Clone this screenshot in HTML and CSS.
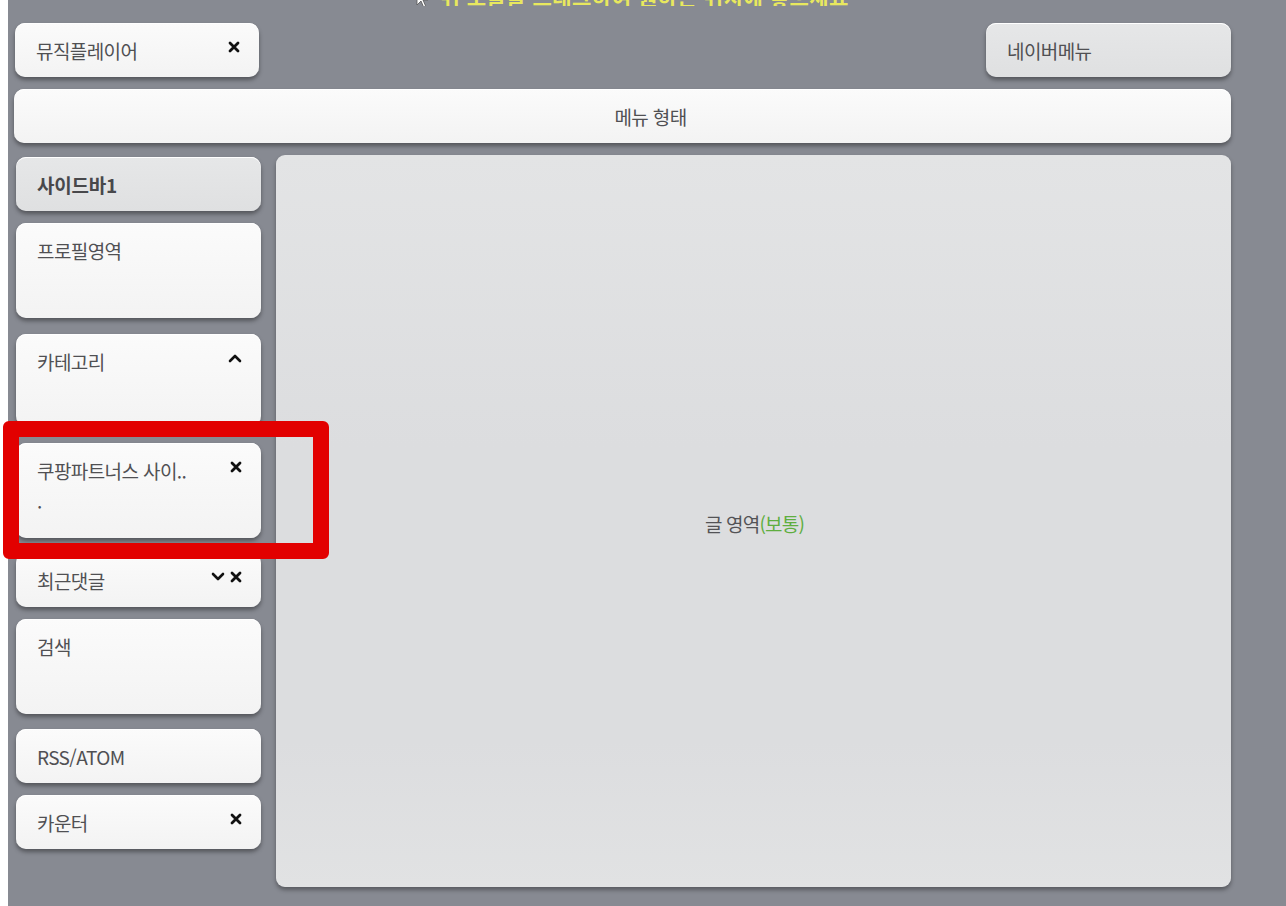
FILE: index.html
```html
<!DOCTYPE html>
<html lang="ko">
<head>
<meta charset="utf-8">
<title>스킨 편집</title>
<link rel="stylesheet" href="styles.css">
</head>
<body>
<div class="stage">
  <div class="hint"><span class="hint-text"><svg class="cursor" width="14" height="20" viewBox="0 0 14 20"><path d="M1 1 L1 16 L5 12 L8 19 L10 18 L7 11 L12 11 Z" fill="#fff" stroke="#555" stroke-width="0.8"/></svg> 위 모듈을 드래그하여 원하는 위치에 놓으세요</span></div>

  <div class="top-row">
    <div class="box box-small music">
      <span class="label">뮤직플레이어</span>
      <span class="icons"><svg class="ico" width="12" height="12" viewBox="0 0 12 12"><path d="M2 2 L10 10 M10 2 L2 10" stroke="#111" stroke-width="2.8" stroke-linecap="round"/></svg></span>
    </div>
    <div class="box box-small box-grey naver">
      <span class="label">네이버메뉴</span>
    </div>
  </div>

  <div class="box box-small menu">
    <span class="label">메뉴 형태</span>
  </div>

  <div class="main-row">
    <div class="sidebar">
      <div class="box box-small box-grey">
        <span class="label bold">사이드바1</span>
      </div>
      <div class="box box-tall gap12">
        <span class="label">프로필영역</span>
      </div>
      <div class="box box-cat gap16">
        <span class="label">카테고리</span>
        <span class="icons"><svg class="ico" width="14" height="12" viewBox="0 0 14 12"><path d="M2 9 L7 4 L12 9" fill="none" stroke="#111" stroke-width="2.6" stroke-linecap="round" stroke-linejoin="round"/></svg></span>
      </div>
      <div class="box box-tall gap17">
        <span class="label">쿠팡파트너스 사이..<br>.</span>
        <span class="icons"><svg class="ico" width="12" height="12" viewBox="0 0 12 12"><path d="M2 2 L10 10 M10 2 L2 10" stroke="#111" stroke-width="2.8" stroke-linecap="round"/></svg></span>
      </div>
      <div class="box box-small gap15">
        <span class="label">최근댓글</span>
        <span class="icons"><svg class="ico" width="14" height="12" viewBox="0 0 14 12"><path d="M2 3 L7 8 L12 3" fill="none" stroke="#111" stroke-width="2.6" stroke-linecap="round" stroke-linejoin="round"/></svg><svg class="ico" width="12" height="12" viewBox="0 0 12 12"><path d="M2 2 L10 10 M10 2 L2 10" stroke="#111" stroke-width="2.8" stroke-linecap="round"/></svg></span>
      </div>
      <div class="box box-tall gap12">
        <span class="label">검색</span>
      </div>
      <div class="box box-small gap15">
        <span class="label">RSS/ATOM</span>
      </div>
      <div class="box box-small gap12">
        <span class="label">카운터</span>
        <span class="icons"><svg class="ico" width="12" height="12" viewBox="0 0 12 12"><path d="M2 2 L10 10 M10 2 L2 10" stroke="#111" stroke-width="2.8" stroke-linecap="round"/></svg></span>
      </div>
    </div>
    <div class="content">
      <span class="content-label">글 영역<span class="green">(보통)</span></span>
    </div>
  </div>
</div>
<div class="highlight"></div>
</body>
</html>
```

FILE: styles.css
```css
html, body {
  margin: 0;
  padding: 0;
  background: #ffffff;
}

body {
  position: relative;
  width: 1286px;
  height: 906px;
  overflow: hidden;
  font-family: "Noto Sans CJK KR", "Noto Sans", sans-serif;
}

.stage {
  margin-left: 8px;
  height: 906px;
  background: #878a92;
  padding: 0 55px 0 6px;
  box-sizing: border-box;
}

.hint {
  height: 6px;
  overflow: hidden;
  text-align: center;
  padding-left: 20px;
}

.hint-text {
  display: inline-block;
  transform: translateY(-17px);
  color: #e8e85e;
  font-weight: 700;
  font-size: 21px;
  line-height: 26px;
  letter-spacing: 0.5px;
}

.cursor {
  vertical-align: -4px;
  margin-right: 4px;
}

.top-row {
  margin-top: 17px;
  display: flex;
  justify-content: space-between;
}

.box {
  display: flex;
  justify-content: space-between;
  align-items: flex-start;
  box-sizing: border-box;
  padding: 13px 19px 0 21px;
  border-radius: 10px;
  background: linear-gradient(#fbfbfb, #f3f3f3);
  box-shadow: 0 3px 4px rgba(0, 0, 0, 0.38), inset 0 1px 0 #ffffff;
  color: #505053;
}

.box-grey {
  background: linear-gradient(#e6e7e8, #dfe0e1);
}

.box-small {
  height: 54px;
}

.box-tall {
  height: 95px;
}

.box-cat {
  height: 92px;
}

.label {
  font-size: 19px;
  line-height: 30px;
  letter-spacing: -0.6px;
}

.label.bold {
  font-weight: 700;
  color: #48484b;
  letter-spacing: -0.2px;
}

.icons {
  display: flex;
  gap: 5px;
  margin-top: 5px;
}

.ico {
  display: block;
}

.music {
  width: 244px;
  margin-left: 1px;
}

.naver {
  width: 245px;
}

.menu {
  margin-top: 12px;
  justify-content: center;
  padding-left: 56px;
  padding-right: 0;
}

.main-row {
  margin-top: 12px;
  display: flex;
  align-items: flex-start;
}

.sidebar {
  width: 245px;
  margin-left: 2px;
  margin-top: 2px;
  display: flex;
  flex-direction: column;
}

.gap12 { margin-top: 12px; }
.gap15 { margin-top: 15px; }
.gap16 { margin-top: 16px; }
.gap17 { margin-top: 17px; }

.content {
  flex: 1;
  margin-left: 15px;
  height: 732px;
  border-radius: 9px;
  background: linear-gradient(#e3e4e5, #dcdddf 40%, #dcdddf 80%, #e1e2e3);
  box-shadow: 0 3px 4px rgba(0, 0, 0, 0.35);
  display: flex;
  align-items: center;
  justify-content: center;
}

.content-label {
  font-size: 19px;
  line-height: 24px;
  letter-spacing: -0.8px;
  color: #535356;
  margin-left: 2px;
  margin-top: 6px;
}

.green {
  color: #5fae3f;
}

.highlight {
  position: absolute;
  left: 3px;
  top: 421px;
  width: 326px;
  height: 138px;
  box-sizing: border-box;
  border: 16px solid #e20000;
  border-radius: 6px;
}
```
